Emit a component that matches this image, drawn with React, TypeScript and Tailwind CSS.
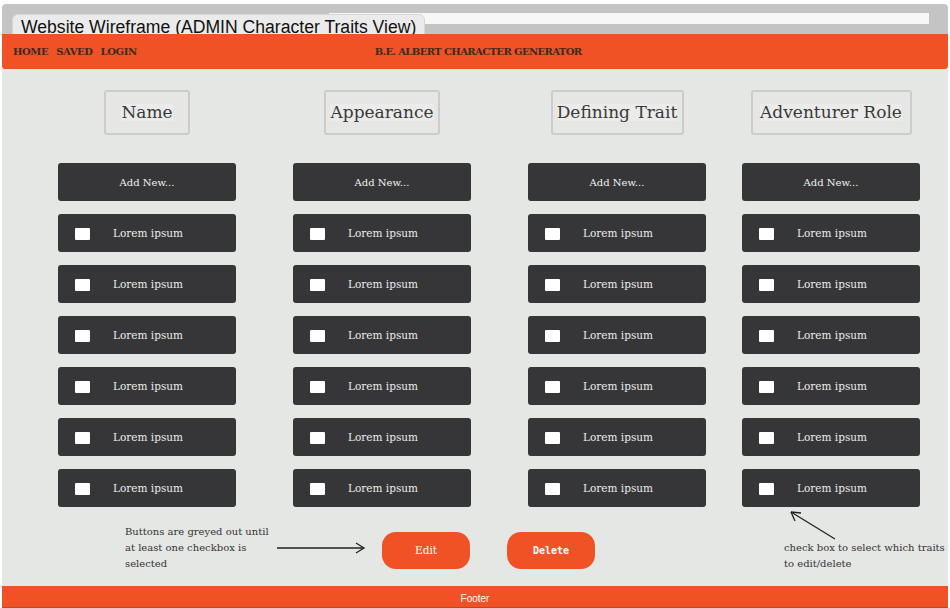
import React from "react";

const serif = { fontFamily: '"DejaVu Serif", "Liberation Serif", serif' };

const columns = [
  { title: "Name", w: "w-[86px]" },
  { title: "Appearance", w: "w-[116px]" },
  { title: "Defining Trait", w: "w-[133px]" },
  { title: "Adventurer Role", w: "w-[161px]" },
];

function Column({ title, w, extra }: { title: string; w: string; extra?: string }) {
  return (
    <div className={`flex w-[178px] flex-col items-center ${extra ?? ""}`}>
      <div
        className={`flex h-[45px] ${w} items-center justify-center rounded-[3px] border-2 border-[#cbcccb] bg-[#e6e7e5]`}
      >
        <span className="bg-[#ebecea] text-[17px] leading-none text-[#393939]" style={serif}>
          {title}
        </span>
      </div>
      <div className="mt-[28px] flex w-full flex-col gap-[13px]">
        <div
          className="flex h-[38px] w-full items-center justify-center rounded-[3px] bg-[#363638] text-[10px] text-[#f2f2f2]"
          style={serif}
        >
          Add New...
        </div>
        {Array.from({ length: 6 }).map((_, i) => (
          <div key={i} className="flex h-[38px] w-full items-center rounded-[3px] bg-[#363638] pt-[1px]">
            <div className="ml-[17px] h-[12px] w-[15px] rounded-[1px] bg-white" />
            <span className="ml-[23px] text-[10.5px] text-[#ececec]" style={serif}>
              Lorem ipsum
            </span>
          </div>
        ))}
      </div>
    </div>
  );
}

export default function App() {
  return (
    <div className="h-[608px] w-[950px] overflow-hidden bg-white">
      <div className="relative mx-[2px] mt-[4px] flex h-[604px] flex-col">
        {/* top gray bar */}
        <div className="flex h-[30px] items-start rounded-t-[4px] bg-[#c4c4c4] pt-[9px] pr-[19px]">
          <div className="ml-auto h-[11px] w-[600px] bg-[#f7f7f7]" />
        </div>
        {/* title label overlay */}
        <div
          className="absolute left-[10px] top-[10px] flex h-[27px] items-center rounded-[6px] border border-[#d6d6d6] bg-[#ebebeb] px-[8px] text-[17.6px] text-[#111]"
          style={{ fontFamily: '"Liberation Sans", Arial, sans-serif' }}
        >
          Website Wireframe (ADMIN Character Traits View)
        </div>
        {/* header */}
        <div className="relative flex h-[35px] items-start rounded-b-[3px] bg-[#f05125] pt-[10px]">
          <div
            className="ml-[11px] flex gap-[8px] text-[10px] font-bold tracking-[-0.4px] text-[#3a2a20]"
            style={serif}
          >
            <span>HOME</span>
            <span>SAVED</span>
            <span>LOGIN</span>
          </div>
          <div
            className="ml-[238px] text-[10px] font-bold tracking-[-0.6px] text-[#3a2a20]"
            style={serif}
          >
            B.E. ALBERT CHARACTER GENERATOR
          </div>
        </div>
        {/* body */}
        <div className="relative flex-1 bg-[#e5e7e4] pt-[21px]">
          <div className="flex pl-[56px]">
            <Column {...columns[0]} />
            <Column {...columns[1]} extra="ml-[57px]" />
            <Column {...columns[2]} extra="ml-[57px]" />
            <Column {...columns[3]} extra="ml-[36px]" />
          </div>
          {/* bottom actions */}
          <div className="mt-[17px] flex items-start">
            <div className="ml-[123px] w-[150px] text-[10px] leading-[16px] text-[#333]" style={serif}>
              Buttons are greyed out until at least one checkbox is selected
            </div>
            <svg width="92" height="12" viewBox="0 0 92 12" className="ml-[1px] mt-[18px]">
              <path d="M1 6 L88 6" stroke="#222" strokeWidth="1.3" fill="none" />
              <path d="M80 1 L88 6 L80 11" stroke="#222" strokeWidth="1.3" fill="none" />
            </svg>
            <div
              className="ml-[14px] mt-[8px] flex h-[37px] w-[88px] items-center justify-center rounded-[14px] bg-[#f05125] text-[10.5px] text-white"
              style={serif}
            >
              Edit
            </div>
            <div
              className="ml-[37px] mt-[8px] flex h-[37px] w-[88px] items-center justify-center rounded-[14px] bg-[#f05125] text-[10px] font-bold text-white"
              style={{ fontFamily: '"DejaVu Sans Mono", "Liberation Mono", monospace' }}
            >
              Delete
            </div>
          </div>
          {/* right annotation */}
          <svg width="50" height="32" viewBox="0 0 50 32" className="absolute left-[786px] top-[440px]">
            <path d="M47 30 L3 3" stroke="#222" strokeWidth="1.3" fill="none" />
            <path d="M3 3 L13 4" stroke="#222" strokeWidth="1.3" fill="none" />
            <path d="M3 3 L7 12" stroke="#222" strokeWidth="1.3" fill="none" />
          </svg>
          <div
            className="absolute left-[782px] top-[471px] w-[170px] text-[10px] leading-[16px] text-[#333]"
            style={serif}
          >
            check box to select which traits to edit/delete
          </div>
        </div>
        {/* footer */}
        <div
          className="flex h-[22px] items-start justify-center border-b border-[#b8482a] bg-[#f05125] pt-[8px] text-[10px] leading-none text-white"
          style={{ fontFamily: '"Liberation Sans", Arial, sans-serif' }}
        >
          Footer
        </div>
      </div>
    </div>
  );
}
